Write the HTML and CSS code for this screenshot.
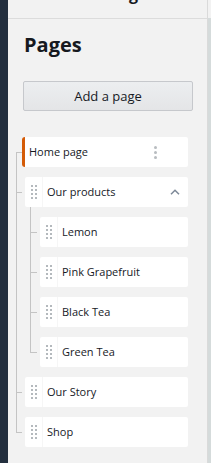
FILE: index.html
```html
<!DOCTYPE html>
<html>
<head>
<meta charset="utf-8">
<link rel="stylesheet" href="styles.css">
</head>
<body>
<div class="app">
  <div class="rail"></div>
  <main class="panel">
    <header class="top"><span class="top-title">Store Settings</span></header>
    <h1 class="title">Pages</h1>
    <button class="add">Add a page</button>
    <ul class="tree">
      <li class="node">
        <div class="card card-home">
          <span class="label">Home page</span>
          <svg class="kebab" width="3" height="13" viewBox="0 0 3 13"><circle cx="1.5" cy="1.5" r="1.5"/><circle cx="1.5" cy="6.5" r="1.5"/><circle cx="1.5" cy="11.5" r="1.5"/></svg>
        </div>
      </li>
      <li class="node">
        <div class="card">
          <span class="handle"><svg width="6" height="14" viewBox="0 0 6 14"><rect x="0" y="0" width="2" height="2"/><rect x="4" y="0" width="2" height="2"/><rect x="0" y="4" width="2" height="2"/><rect x="4" y="4" width="2" height="2"/><rect x="0" y="8" width="2" height="2"/><rect x="4" y="8" width="2" height="2"/><rect x="0" y="12" width="2" height="2"/><rect x="4" y="12" width="2" height="2"/></svg></span>
          <span class="label">Our products</span>
          <svg class="chev" width="10" height="6" viewBox="0 0 10 6"><polyline points="1,5.2 5,1.2 9,5.2"/></svg>
        </div>
        <ul class="children">
          <li class="node">
            <div class="card">
              <span class="handle"><svg width="6" height="14" viewBox="0 0 6 14"><rect x="0" y="0" width="2" height="2"/><rect x="4" y="0" width="2" height="2"/><rect x="0" y="4" width="2" height="2"/><rect x="4" y="4" width="2" height="2"/><rect x="0" y="8" width="2" height="2"/><rect x="4" y="8" width="2" height="2"/><rect x="0" y="12" width="2" height="2"/><rect x="4" y="12" width="2" height="2"/></svg></span>
              <span class="label">Lemon</span>
            </div>
          </li>
          <li class="node">
            <div class="card">
              <span class="handle"><svg width="6" height="14" viewBox="0 0 6 14"><rect x="0" y="0" width="2" height="2"/><rect x="4" y="0" width="2" height="2"/><rect x="0" y="4" width="2" height="2"/><rect x="4" y="4" width="2" height="2"/><rect x="0" y="8" width="2" height="2"/><rect x="4" y="8" width="2" height="2"/><rect x="0" y="12" width="2" height="2"/><rect x="4" y="12" width="2" height="2"/></svg></span>
              <span class="label">Pink Grapefruit</span>
            </div>
          </li>
          <li class="node">
            <div class="card">
              <span class="handle"><svg width="6" height="14" viewBox="0 0 6 14"><rect x="0" y="0" width="2" height="2"/><rect x="4" y="0" width="2" height="2"/><rect x="0" y="4" width="2" height="2"/><rect x="4" y="4" width="2" height="2"/><rect x="0" y="8" width="2" height="2"/><rect x="4" y="8" width="2" height="2"/><rect x="0" y="12" width="2" height="2"/><rect x="4" y="12" width="2" height="2"/></svg></span>
              <span class="label">Black Tea</span>
            </div>
          </li>
          <li class="node">
            <div class="card">
              <span class="handle"><svg width="6" height="14" viewBox="0 0 6 14"><rect x="0" y="0" width="2" height="2"/><rect x="4" y="0" width="2" height="2"/><rect x="0" y="4" width="2" height="2"/><rect x="4" y="4" width="2" height="2"/><rect x="0" y="8" width="2" height="2"/><rect x="4" y="8" width="2" height="2"/><rect x="0" y="12" width="2" height="2"/><rect x="4" y="12" width="2" height="2"/></svg></span>
              <span class="label">Green Tea</span>
            </div>
          </li>
        </ul>
      </li>
      <li class="node">
        <div class="card">
          <span class="handle"><svg width="6" height="14" viewBox="0 0 6 14"><rect x="0" y="0" width="2" height="2"/><rect x="4" y="0" width="2" height="2"/><rect x="0" y="4" width="2" height="2"/><rect x="4" y="4" width="2" height="2"/><rect x="0" y="8" width="2" height="2"/><rect x="4" y="8" width="2" height="2"/><rect x="0" y="12" width="2" height="2"/><rect x="4" y="12" width="2" height="2"/></svg></span>
          <span class="label">Our Story</span>
        </div>
      </li>
      <li class="node">
        <div class="card">
          <span class="handle"><svg width="6" height="14" viewBox="0 0 6 14"><rect x="0" y="0" width="2" height="2"/><rect x="4" y="0" width="2" height="2"/><rect x="0" y="4" width="2" height="2"/><rect x="4" y="4" width="2" height="2"/><rect x="0" y="8" width="2" height="2"/><rect x="4" y="8" width="2" height="2"/><rect x="0" y="12" width="2" height="2"/><rect x="4" y="12" width="2" height="2"/></svg></span>
          <span class="label">Shop</span>
        </div>
      </li>
    </ul>
  </main>
  <div class="edge"></div>
</div>
</body>
</html>
```

FILE: styles.css
```css
* { box-sizing: border-box; }
html, body { margin: 0; padding: 0; }
body {
  background: #f2f2f2;
  font-family: "Open Sans", "Noto Sans", sans-serif;
  color: #16191f;
}
.app {
  display: flex;
  height: 463px;
  overflow: hidden;
}
.rail {
  width: 8px;
  flex: none;
  background: #232f3e;
}
.panel {
  width: 199px;
  flex: none;
  background: #f2f2f2;
  display: flex;
  flex-direction: column;
}
.edge {
  flex: 1;
  border-left: 1px solid #dadada;
  background: linear-gradient(#f2f2f2 0 18px, #d5dbdb 18px);
}
.top {
  height: 19px;
  border-bottom: 1px solid #dcdcdc;
  display: flex;
  overflow: hidden;
  padding-left: 27px;
}
.top-title {
  margin-top: -14px;
  font-size: 16px;
  line-height: 16px;
  font-weight: 700;
  white-space: nowrap;
}
.title {
  margin: 14px 0 0 16px;
  font-size: 20px;
  line-height: 24px;
  font-weight: 700;
}
.add {
  margin: 24px 0 0 15px;
  width: 170px;
  height: 30px;
  border: 1px solid #c6c8cc;
  border-radius: 2px;
  background: linear-gradient(#eceef0, #e4e5e7);
  font-family: inherit;
  font-size: 13px;
  color: #16191f;
  padding: 0;
}
.tree, .children {
  list-style: none;
  margin: 0;
  padding: 0;
  display: flex;
  flex-direction: column;
  gap: 10px;
  position: relative;
}
.tree {
  margin: 26px 0 0 8px;
  padding-left: 9px;
  width: 172px;
}
.tree::before {
  content: "";
  position: absolute;
  left: 0;
  top: 15px;
  bottom: 15px;
  width: 1px;
  background: #c4c4c4;
}
.children {
  margin-top: 10px;
  padding-left: 15px;
}
.children::before {
  content: "";
  position: absolute;
  left: 5px;
  top: -10px;
  bottom: 15px;
  width: 1px;
  background: #c4c4c4;
}
.node { display: block; }
.card {
  position: relative;
  height: 30px;
  background: #fff;
  border-radius: 2px;
  display: flex;
  align-items: center;
}
.card::before {
  content: "";
  position: absolute;
  left: -9px;
  top: 15px;
  width: 6px;
  height: 1px;
  background: #c4c4c4;
}
.children .card::before {
  left: -10px;
  width: 7px;
}
.card-home {
  margin-left: -3px;
  border-left: 3px solid #d45b07;
  border-radius: 3px 2px 2px 3px;
  padding-left: 4px;
}
.card-home::before {
  left: -9px;
  width: 6px;
}
.handle {
  width: 18px;
  height: 30px;
  flex: none;
  display: flex;
  align-items: center;
  padding-left: 6px;
  border-right: 1px solid #f6f6f6;
}
.handle svg { fill: #b4b9bd; display: block; }
.label {
  flex: 1;
  font-size: 11px;
  line-height: 14px;
  white-space: nowrap;
  padding-left: 4px;
}
.card-home .label { padding-left: 0; }
.kebab {
  fill: #b8bcc0;
  margin-right: 31px;
  flex: none;
}
.chev {
  fill: none;
  stroke: #7d8998;
  stroke-width: 1.5;
  margin-right: 8px;
  flex: none;
}
```
